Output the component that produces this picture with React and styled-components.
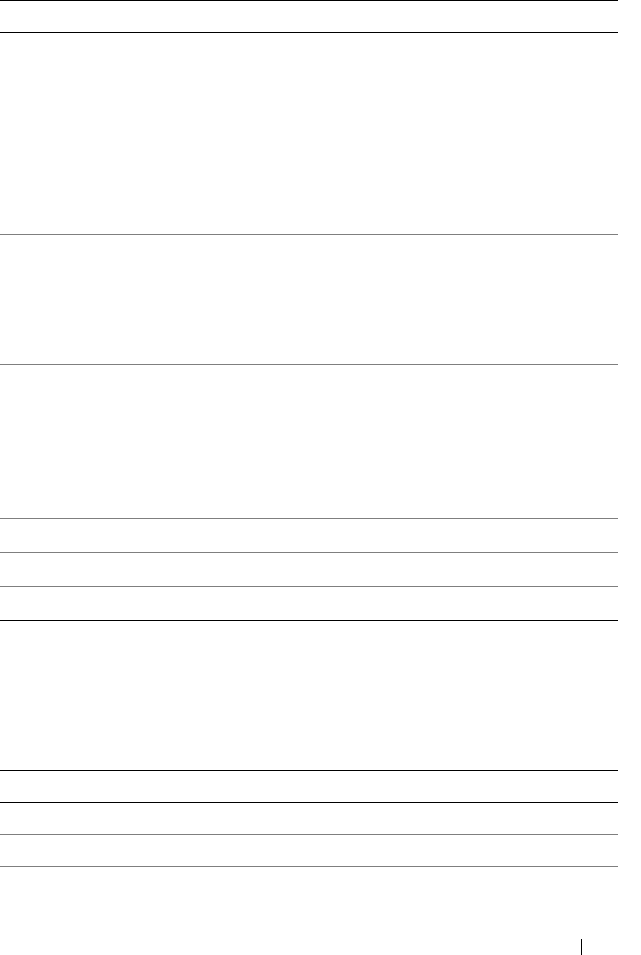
import styled, { createGlobalStyle } from "styled-components";

const GlobalStyle = createGlobalStyle`
  html, body {
    margin: 0;
    padding: 0;
    background: #fff;
    font-family: "Liberation Serif", serif;
  }
`;

const rows = [
  { h: 32, line: "dark" },
  { h: 202, line: "light" },
  { h: 130, line: "light" },
  { h: 154, line: "light" },
  { h: 34, line: "light" },
  { h: 34, line: "light" },
  { h: 34, line: "dark" },
  { h: 150, line: "dark" },
  { h: 32, line: "dark" },
  { h: 32, line: "light" },
  { h: 32, line: "light" },
];

export default function App() {
  return (
    <>
      <GlobalStyle />
      <Page>
        <Table>
          {rows.map((row, index) => (
            <Row key={index} $h={row.h} $line={row.line} />
          ))}
        </Table>
        <Footer>
          <PageMark />
        </Footer>
      </Page>
    </>
  );
}

const Page = styled.div`
  width: 641px;
  height: 955px;
  display: flex;
  flex-direction: column;
  overflow: hidden;
`;

const Table = styled.div`
  width: 618px;
  display: flex;
  flex-direction: column;
  border-top: 1.5px solid #000;
`;

const Row = styled.div`
  box-sizing: border-box;
  height: ${(p) => p.$h}px;
  border-bottom: 1px solid ${(p) => (p.$line === "dark" ? "#000" : "#7f7f7f")};
`;

const Footer = styled.div`
  flex: 1;
  display: flex;
  align-items: flex-end;
  padding-left: 581px;
`;

const PageMark = styled.div`
  width: 1px;
  height: 16px;
  background: #000;
`;
